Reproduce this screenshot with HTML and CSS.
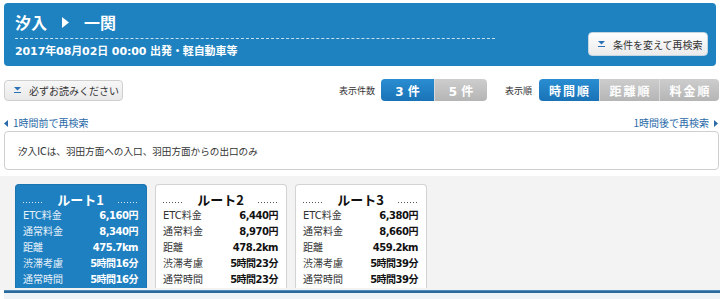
FILE: index.html
```html
<!DOCTYPE html>
<html lang="ja">
<head>
<meta charset="utf-8">
<title>汐入 - 一関</title>
<link rel="stylesheet" href="styles.css">
</head>
<body>
<div class="page">
  <header class="header">
    <div class="header-main">
      <div class="title">
        <span>汐入</span>
        <svg class="title-arrow" width="7" height="11" viewBox="0 0 7 11"><polygon points="0,0 7,5.5 0,11" fill="#fff"/></svg>
        <span>一関</span>
      </div>
      <div class="subtitle">2017年08月02日 00:00 出発・軽自動車等</div>
    </div>
    <button class="btn btn-header">
      <svg class="dd-icon" width="7" height="6" viewBox="0 0 7 6"><polygon points="0,0 7,0 3.5,3.5" fill="#2a72b5"/><rect x="0" y="5" width="7" height="1" fill="#2a72b5"/></svg>
      条件を変えて再検索
    </button>
  </header>

  <div class="toolbar">
    <button class="btn btn-notice">
      <svg class="dd-icon" width="7" height="6" viewBox="0 0 7 6"><polygon points="0,0 7,0 3.5,3.5" fill="#2a72b5"/><rect x="0" y="5" width="7" height="1" fill="#2a72b5"/></svg>
      必ずお読みください
    </button>
    <div class="toolbar-right">
      <span class="seg-label">表示件数</span>
      <div class="seg seg-count">
        <span class="seg-item on">3 件</span>
        <span class="seg-item">5 件</span>
      </div>
      <span class="seg-label label-order">表示順</span>
      <div class="seg seg-order">
        <span class="seg-item on">時間順</span>
        <span class="seg-item">距離順</span>
        <span class="seg-item">料金順</span>
      </div>
    </div>
  </div>

  <div class="links">
    <a class="link" href="#"><svg width="4" height="7" viewBox="0 0 4 7"><polygon points="4,0 0,3.5 4,7" fill="#2a6aa8"/></svg>1時間前で再検索</a>
    <a class="link" href="#">1時間後で再検索<svg width="4" height="7" viewBox="0 0 4 7"><polygon points="0,0 4,3.5 0,7" fill="#2a6aa8"/></svg></a>
  </div>

  <div class="info">汐入ICは、羽田方面への入口、羽田方面からの出口のみ</div>

  <div class="routes">
    <div class="route active">
      <div class="route-title"><span class="dots"></span><span class="route-name">ルート1</span><span class="dots"></span></div>
      <div class="row"><span>ETC料金</span><b>6,160円</b></div>
      <div class="row"><span>通常料金</span><b>8,340円</b></div>
      <div class="row"><span>距離</span><b>475.7km</b></div>
      <div class="row"><span>渋滞考慮</span><b>5時間16分</b></div>
      <div class="row"><span>通常時間</span><b>5時間16分</b></div>
    </div>
    <div class="route">
      <div class="route-title"><span class="dots"></span><span class="route-name">ルート2</span><span class="dots"></span></div>
      <div class="row"><span>ETC料金</span><b>6,440円</b></div>
      <div class="row"><span>通常料金</span><b>8,970円</b></div>
      <div class="row"><span>距離</span><b>478.2km</b></div>
      <div class="row"><span>渋滞考慮</span><b>5時間23分</b></div>
      <div class="row"><span>通常時間</span><b>5時間23分</b></div>
    </div>
    <div class="route">
      <div class="route-title"><span class="dots"></span><span class="route-name">ルート3</span><span class="dots"></span></div>
      <div class="row"><span>ETC料金</span><b>6,380円</b></div>
      <div class="row"><span>通常料金</span><b>8,660円</b></div>
      <div class="row"><span>距離</span><b>459.2km</b></div>
      <div class="row"><span>渋滞考慮</span><b>5時間39分</b></div>
      <div class="row"><span>通常時間</span><b>5時間39分</b></div>
    </div>
  </div>
  <div class="routes-line"></div>
  <div class="routes-below"></div>
</div>
</body>
</html>
```

FILE: styles.css
```css
* { box-sizing: border-box; }
html, body { margin: 0; padding: 0; background: #fff; }
body {
  font-family: "DejaVu Sans", "Noto Sans CJK JP", sans-serif;
  font-size: 10px;
  color: #333;
  overflow: hidden;
}
.page { padding: 3px 1px 0 4px; }

.header {
  display: flex;
  justify-content: space-between;
  height: 63px;
  margin-right: 3px;
  padding: 9px 8px 0 11px;
  background: #1e82c0;
  border-radius: 4px;
  color: #fff;
}
.title {
  display: flex;
  align-items: center;
  width: 480px;
  height: 27px;
  padding-bottom: 6px;
  border-bottom: 1px dashed rgba(255,255,255,0.75);
  font-family: "Noto Sans CJK JP", sans-serif;
  font-size: 16px;
  font-weight: bold;
  line-height: 20px;
}
.title-arrow { margin: 0 15px 0 15px; }
.subtitle {
  margin-top: 6px;
  font-size: 11px;
  font-weight: bold;
  line-height: 14px;
  letter-spacing: -0.1px;
}

.btn {
  display: flex;
  align-items: center;
  font-family: "Noto Sans CJK JP", sans-serif;
  font-size: 10px;
  color: #333;
  border-radius: 4px;
  padding: 0 0 0 9px;
  cursor: pointer;
}
.dd-icon { margin-right: 8px; }
.btn-header {
  align-self: flex-end;
  margin-bottom: 10px;
  width: 120px;
  height: 24px;
  background: linear-gradient(#ffffff, #ebebeb);
  border: 1px solid #c5d5e2;
}
.btn-notice {
  width: 119px;
  height: 21px;
  background: linear-gradient(#f7f7f7, #e9e9e9);
  border: 1px solid #cfcfcf;
}

.toolbar {
  display: flex;
  justify-content: space-between;
  align-items: center;
  margin-top: 13px;
  height: 22px;
}
.toolbar-right { display: flex; align-items: center; }
.seg-label {
  font-family: "Noto Sans CJK JP", sans-serif;
  font-size: 9px;
  color: #333;
  margin-right: 6px;
}
.label-order { margin-left: 18px; margin-right: 7px; }
.seg { display: flex; height: 22px; }
.seg-item {
  display: flex;
  align-items: center;
  justify-content: center;
  font-family: "DejaVu Sans", "Noto Sans CJK JP", sans-serif;
  font-size: 12px;
  font-weight: bold;
  color: #fff;
  background: linear-gradient(#cdcdcd, #b5b5b5);
  border-left: 1px solid #d9d9d9;
}
.seg-item:first-child { border-left: none; border-radius: 4px 0 0 4px; }
.seg-item:last-child { border-radius: 0 4px 4px 0; }
.seg-item.on { background: linear-gradient(#2a8dd2, #1a73b6); }
.seg-count .seg-item { width: 53px; }
.seg-order .seg-item { width: 60px; letter-spacing: 2px; padding-left: 2px; }

.links {
  display: flex;
  justify-content: space-between;
  margin-top: 15px;
  height: 14px;
  line-height: 14px;
}
.link {
  display: flex;
  align-items: center;
  gap: 5px;
  font-family: "Noto Sans CJK JP", sans-serif;
  font-size: 10px;
  color: #2a6aa8;
  text-decoration: none;
}
.links .link:last-child { margin-right: 1px; }

.info {
  display: flex;
  align-items: center;
  height: 39px;
  margin-top: 1px;
  padding-left: 13px;
  background: #fff;
  border: 1px solid #cfcfcf;
  border-radius: 4px;
  font-family: "DejaVu Sans", "Noto Sans CJK JP", sans-serif;
  font-size: 9.6px;
  color: #333;
}

.routes {
  display: flex;
  gap: 8px;
  margin: 6px -1px 0 -4px;
  padding: 8px 0 2px 15px;
  background: #f3f3f3;
}
.route {
  width: 132px;
  height: 104px;
  padding: 5px 8px 0 7px;
  background: #fff;
  border: 1px solid #d3d3d3;
  border-bottom: none;
  border-radius: 4px 4px 0 0;
  color: #333;
}
.route.active {
  background: #1f80c1;
  border-color: #1c74b0;
  color: #e6f1fa;
}
.route-title {
  display: flex;
  justify-content: space-between;
  align-items: center;
  height: 18px;
}
.route-name {
  font-family: "Noto Sans CJK JP", sans-serif;
  font-size: 13px;
  font-weight: bold;
  color: #111;
}
.route.active .route-name { color: #fff; }
.dots {
  width: 20px;
  height: 1px;
  margin-top: 7px;
  background: linear-gradient(to right, #555 1px, transparent 1px) 0 0 / 3px 1px repeat-x;
}
.route.active .dots {
  background: linear-gradient(to right, #d6e8f5 1px, transparent 1px) 0 0 / 3px 1px repeat-x;
}
.row {
  display: flex;
  justify-content: space-between;
  height: 16px;
  line-height: 16px;
}
.row b {
  font-weight: bold;
  letter-spacing: -0.5px;
  color: #111;
}
.route.active .row b { color: #fff; }

.routes-line {
  height: 3px;
  margin-right: -1px;
  background: #2b6b9c;
  border-top: 1px solid #4f8cba;
}
.routes-below {
  height: 10px;
  margin-right: -1px;
  background: #eef3f8;
}
```
